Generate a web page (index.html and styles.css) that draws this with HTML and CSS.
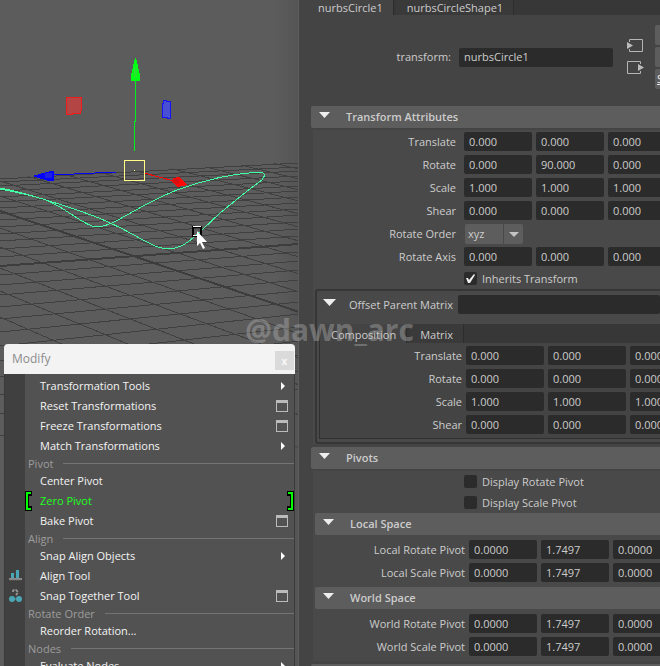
FILE: index.html
```html
<!DOCTYPE html>
<html lang="en">
<head>
<meta charset="utf-8">
<title>Modify</title>
<link rel="stylesheet" href="styles.css">
</head>
<body>
<main class="app">
  <section class="viewport" aria-label="Viewport">
    <svg class="scene" width="298" height="666" viewBox="0 0 298 666" shape-rendering="crispEdges" aria-hidden="true">
      <defs>
        <clipPath id="ground"><path d="M0 178 299 162V666H0z"/></clipPath>
      </defs>
      <g class="grid" clip-path="url(#ground)">
        <path d="M0 179 299 163M0 182 299 167M0 186 299 171M0 191 299 176M0 197 299 181M0 202 299 186M0 208 299 191M0 214 299 197M0 220 299 203M0 227 299 209M0 234 299 215M0 241 299 222M0 249 299 229M0 257 299 236M0 275 299 252M0 285 299 261M0 295 299 270M0 307 299 280M0 319 299 291M0 332 299 302M0 346 299 314M0 361 299 327M0 377 299 341M0 395 299 355M0 414 299 371M0 436 299 389"/>
        <path d="M0 92 299 159M0 100 299 169M0 107 299 179M0 116 299 190M0 125 299 201M0 135 299 214M0 145 299 227M0 156 299 241M0 168 299 257M0 181 299 274M0 196 299 292M0 228 299 334M0 247 299 358M0 268 299 385M0 291 299 415M0 317 299 448"/>
        <path class="axis" d="M0 266 299 244M0 211 299 312"/>
      </g>
      <path class="curve" d="M0 188C18 191 32 196 46 200C64 207 78 221 92 226C101 228 107 225 114 222C132 213 154 198 180 189C205 180 235 173 262 172L265 175L262 180L246 192L220 213L202 230C190 241 181 249 168 249C151 248 136 234 110 223C92 214 68 207 46 200C30 195 16 192 0 189"/>
      <path d="M135.500 80V121H134.500V151" fill="none" stroke="#00f01c"/>
      <path d="M135 58h1l4 17v6h-9v-6z" fill="#00ff15"/>
      <path d="M134 68h3v9h-3z" fill="#23e82c"/>
      <path d="M66.500 97.500H81.500V109L80.500 113.500H73L72 114.500H66.500z" fill="#b34545" stroke="#ef1c1c"/>
      <path d="M163.500 100.500H166L167 101.500H170.500V118.500H168L167 117.500H162.500V103.500H163.500z" fill="#484fd5" stroke="#1616f5"/>
      <path d="M53 175 116 172" fill="none" stroke="#0404f5"/>
      <path d="M32 176 51 171h3v10h-5z" fill="#0303ff"/>
      <path d="M45 173h7v5h-7z" fill="#2020e0"/>
      <path d="M144 173 174 181" fill="none" stroke="#f00"/>
      <path d="M173 178 179 177 187 184V185L177 187 172 182z" fill="#ff0808"/>
      <path d="M174 179h5v5h-4l-2-2z" fill="#d91010"/>
      <rect x="124.500" y="160.500" width="20" height="20" fill="none" stroke="#ffff85"/>
      <path d="M134 170h1v1h-1z" fill="#ffff85"/>
      <rect x="193" y="226.500" width="8" height="9" fill="none" stroke="#000" stroke-width="2"/>
      <path d="M193 226h8v1h-8zM193 235h5v1h-5z" fill="#fff"/>
      <path d="M197 231V246L200 243 203 249 205 248 202 242H207z" fill="#fff" shape-rendering="auto"/>
    </svg>

    <nav class="menu" aria-label="Modify">
      <header class="menu-title"><span>Modify</span><button class="close" type="button" aria-label="Close">x</button></header>
      <div class="menu-body">
        <button class="item" type="button">Transformation Tools<i class="more"></i></button>
        <button class="item" type="button">Reset Transformations<i class="option"></i></button>
        <button class="item" type="button">Freeze Transformations<i class="option"></i></button>
        <button class="item" type="button">Match Transformations<i class="more"></i></button>
        <div class="group">Pivot</div>
        <button class="item" type="button">Center Pivot</button>
        <button class="item picked" type="button">Zero Pivot
          <svg class="bracket" width="7" height="20" aria-hidden="true"><path d="M0 0h7v5H4v10h3v5H0z" fill="#000"/><path d="M1 1h5v2H3v14h3v2H1z" fill="#0f0"/></svg>
          <svg class="bracket end" width="7" height="20" aria-hidden="true"><path d="M7 0H0v5h3v10H0v5h7z" fill="#000"/><path d="M6 1H1v2h3v14H1v2h5z" fill="#0f0"/></svg>
        </button>
        <button class="item" type="button">Bake Pivot<i class="option"></i></button>
        <div class="group">Align</div>
        <button class="item" type="button">Snap Align Objects<i class="more"></i></button>
        <button class="item" type="button">
          <svg class="tool" width="14" height="14" aria-hidden="true"><path d="M2 4h3v5H2zM7 1h3v8H7z" fill="#4aa6b5"/><path d="M0 9h13v2H0z" fill="#898989"/><path d="M1 11h11" stroke="#777" stroke-dasharray="1"/></svg>
          Align Tool</button>
        <button class="item" type="button">
          <svg class="tool" width="14" height="14" aria-hidden="true"><path d="M4 3Q4 0 7 1Q10 3 7 6" fill="none" stroke="#929292" stroke-width="2" stroke-dasharray="3 1"/><circle cx="3" cy="10" r="3" fill="#4aa6b5"/><circle cx="10" cy="10" r="3" fill="#4aa6b5"/><path d="M6 10h1" stroke="#4aa6b5"/></svg>
          Snap Together Tool<i class="option"></i></button>
        <div class="group">Rotate Order</div>
        <button class="item" type="button">Reorder Rotation...</button>
        <div class="group">Nodes</div>
        <button class="item" type="button">Evaluate Nodes<i class="more"></i></button>
      </div>
    </nav>
  </section>

  <section class="editor" aria-label="Attribute editor">
    <div class="tabs" role="tablist">
      <button class="tab active" type="button" role="tab" aria-selected="true">nurbsCircle1</button>
      <button class="tab" type="button" role="tab" aria-selected="false">nurbsCircleShape1</button>
    </div>

    <div class="node">
      <label for="node-name">transform:</label>
      <input id="node-name" value="nurbsCircle1">
      <div class="links">
        <button type="button" aria-label="Go to input"><svg width="17" height="14" aria-hidden="true"><path d="M2.500 3V.5H15.500V12.500H2.500V10" fill="none" stroke="#b5b5b5"/><path d="M0 3v7l6-3.500z" fill="#bbb"/></svg></button>
        <button type="button" aria-label="Go to output"><svg width="17" height="14" aria-hidden="true"><path d="M13.500 3V.5H.5V12.500H13.500V10" fill="none" stroke="#b5b5b5"/><path d="M11 3v7l6-3.500z" fill="#bbb"/></svg></button>
      </div>
      <div class="side">
        <button type="button" aria-label="Focus"></button>
        <button type="button" aria-label="Presets"></button>
        <button type="button"><u>S</u>how</button>
      </div>
    </div>

    <h2 class="bar">Transform Attributes</h2>
    <div class="content">
      <div class="row"><label for="t">Translate</label><input id="t" value="0.000"><input aria-label="Translate Y" value="0.000"><input aria-label="Translate Z" value="0.000"></div>
      <div class="row"><label for="r">Rotate</label><input id="r" value="0.000"><input aria-label="Rotate Y" value="90.000"><input aria-label="Rotate Z" value="0.000"></div>
      <div class="row"><label for="s">Scale</label><input id="s" value="1.000"><input aria-label="Scale Y" value="1.000"><input aria-label="Scale Z" value="1.000"></div>
      <div class="row"><label for="h">Shear</label><input id="h" value="0.000"><input aria-label="Shear XZ" value="0.000"><input aria-label="Shear YZ" value="0.000"></div>
      <div class="row"><label for="ro">Rotate Order</label><div class="select"><select id="ro"><option>xyz</option></select></div></div>
      <div class="row"><label for="ra">Rotate Axis</label><input id="ra" value="0.000"><input aria-label="Rotate Axis Y" value="0.000"><input aria-label="Rotate Axis Z" value="0.000"></div>
      <label class="check"><input type="checkbox" checked>Inherits Transform</label>

      <div class="matrix">
        <div class="matrix-head"><label for="opm">Offset Parent Matrix</label><input id="opm"></div>
        <div class="matrix-body">
          <div class="tabs inner" role="tablist">
            <button class="tab active" type="button" role="tab" aria-selected="true">Composition</button>
            <button class="tab" type="button" role="tab" aria-selected="false">Matrix</button>
          </div>
          <div class="row wide"><label for="mt">Translate</label><input id="mt" value="0.000"><input aria-label="Offset translate Y" value="0.000"><input aria-label="Offset translate Z" value="0.000"></div>
          <div class="row wide"><label for="mr">Rotate</label><input id="mr" value="0.000"><input aria-label="Offset rotate Y" value="0.000"><input aria-label="Offset rotate Z" value="0.000"></div>
          <div class="row wide"><label for="ms">Scale</label><input id="ms" value="1.000"><input aria-label="Offset scale Y" value="1.000"><input aria-label="Offset scale Z" value="1.000"></div>
          <div class="row wide"><label for="mh">Shear</label><input id="mh" value="0.000"><input aria-label="Offset shear XZ" value="0.000"><input aria-label="Offset shear YZ" value="0.000"></div>
        </div>
      </div>
    </div>

    <h2 class="bar">Pivots</h2>
    <div class="content">
      <label class="check"><input type="checkbox">Display Rotate Pivot</label>
      <label class="check"><input type="checkbox">Display Scale Pivot</label>
      <h3 class="bar sub">Local Space</h3>
      <div class="pivots">
        <div class="row pivot"><label for="lr">Local Rotate Pivot</label><input id="lr" value="0.0000"><input aria-label="Local rotate pivot Y" value="1.7497"><input aria-label="Local rotate pivot Z" value="0.0000"></div>
        <div class="row pivot"><label for="ls">Local Scale Pivot</label><input id="ls" value="0.0000"><input aria-label="Local scale pivot Y" value="1.7497"><input aria-label="Local scale pivot Z" value="0.0000"></div>
      </div>
      <h3 class="bar sub">World Space</h3>
      <div class="pivots">
        <div class="row pivot"><label for="wr">World Rotate Pivot</label><input id="wr" value="0.0000"><input aria-label="World rotate pivot Y" value="1.7497"><input aria-label="World rotate pivot Z" value="0.0000"></div>
        <div class="row pivot"><label for="ws">World Scale Pivot</label><input id="ws" value="0.0000"><input aria-label="World scale pivot Y" value="1.7497"><input aria-label="World scale pivot Z" value="0.0000"></div>
      </div>
    </div>
    <div class="bar"></div>
  </section>
  <div class="watermark">@dawn_arc</div>
</main>
</body>
</html>
```
FILE: styles.css
```css
*, ::before, ::after { box-sizing: border-box; }

body {
  margin: 0;
  background: #444;
  color: #ccc;
  font: 11px/20px "Open Sans", sans-serif;
}

button, input, select {
  margin: 0;
  border: 0;
  padding: 0;
  font: inherit;
  color: inherit;
  background: none;
}

.app {
  position: relative;
  display: flex;
  height: 100vh;
  overflow: hidden;
}

.viewport {
  position: relative;
  flex: 0 0 298px;
  overflow: hidden;
  background: linear-gradient(90deg, #5c5c5c 92%, #555);
}

.scene { display: block; }
.grid { fill: none; stroke: #404040; }
.axis { stroke: #3d3d3d; stroke-width: 2; }
.curve { fill: none; stroke: #43ffa3; }

/* Floating menu */
.menu {
  position: absolute;
  z-index: 2;
  left: 4px;
  right: 3px;
  top: 344px;
  color: #f4f4f4;
}

.menu-title {
  display: flex;
  justify-content: space-between;
  align-items: center;
  height: 30px;
  padding: 0 1px 0 8px;
  border-radius: 4px 4px 0 0;
  background: #f3f3f3;
  color: #8c8c8c;
  font-size: 12px;
}

.close {
  width: 19px;
  height: 19px;
  margin-top: 3px;
  background: #dadada;
  color: #f8f8f8;
  font-weight: 700;
  font-size: 10px;
  line-height: 16px;
}

.menu-body {
  display: flex;
  flex-direction: column;
  padding: 2px 0;
  border: solid #3a3a3a;
  border-width: 0 1px;
  background: linear-gradient(90deg, #404040 20px, #525252 20px);
}

.item {
  position: relative;
  display: flex;
  align-items: center;
  justify-content: space-between;
  height: 20px;
  padding: 0 6px 0 35px;
  text-align: left;
}

.picked { color: #1fff1f; }

.more {
  width: 0;
  margin-right: 3px;
  border: solid transparent;
  border-width: 4px 0 4px 4px;
  border-left-color: #fff;
}

.option {
  width: 12px;
  height: 12px;
  border: 1px solid #bbb;
  border-top-width: 3px;
}

.bracket { position: absolute; left: 20px; top: 0; }
.bracket.end { left: auto; right: 0; }
.tool { position: absolute; left: 4px; top: 3px; }

.group {
  display: flex;
  align-items: center;
  gap: 10px;
  height: 15px;
  padding-left: 23px;
  color: #9c9c9c;
  line-height: 14px;
}

.group::after {
  content: "";
  flex: 1;
  height: 1px;
  background: #747474;
}

/* Attribute editor */
.editor {
  flex: 1;
  min-width: 0;
  overflow: hidden;
  border-left: 1px solid #5d5d5d;
  background: #444;
}

.tabs {
  display: flex;
  gap: 2px;
  height: 15px;
  margin-left: 8px;
  background: #373737;
}

.tab {
  padding: 0 10px 0 11px;
  border-right: 1px solid #2d2d2d;
  background: #3a3a3a;
  line-height: 15px;
}

.tab.active { background: #444; }

.node {
  display: flex;
  gap: 8px;
  align-items: center;
  height: 91px;
  padding-bottom: 7px;
}

.node > label {
  flex: 0 0 152px;
  text-align: right;
}

.editor input:not([type="checkbox"]) {
  height: 19px;
  padding: 0 5px;
  border-radius: 2px;
  background: #2b2b2b;
}

.node > input {
  flex: 0 0 154px;
  margin-right: 6px;
}

.links {
  display: flex;
  flex-direction: column;
  gap: 8px;
}

.links button { display: flex; }

.side {
  display: flex;
  flex-direction: column;
  gap: 2px;
  flex: 0 0 60px;
  margin-left: 3px;
}

.side button {
  height: 20px;
  padding-left: 2px;
  border-radius: 2px;
  background: #5d5d5d;
  color: #eee;
  text-align: left;
}

.bar {
  display: flex;
  align-items: center;
  height: 22px;
  margin: 0 0 2px 12px;
  padding-left: 8px;
  border-radius: 2px 0 0 2px;
  background: #5d5d5d;
  font-size: 11px;
  font-weight: 600;
  line-height: 24px;
}

.bar:empty::before { display: none; }

.bar::before,
.matrix-head::before {
  content: "";
  flex: 0 0 11px;
  height: 6px;
  margin: 0 16px 4px 0;
  background: #eee;
  clip-path: polygon(0 0, 100% 0, 50% 100%);
}

.bar.sub { margin: 0 0 0 2px; }

.content {
  margin: 0 0 3px 14px;
  background: #494949;
}

.row {
  display: grid;
  grid-template-columns: 147px repeat(3, 68px);
  column-gap: 4px;
  align-items: center;
  height: 23px;
}

.row > label {
  padding-right: 4px;
  text-align: right;
}

.row input { width: 100%; }

.select {
  position: relative;
  width: 58px;
  height: 20px;
  margin-left: 1px;
  border-radius: 2px;
  background: linear-gradient(90deg, #5d5d5d 38px, #494949 38px, #494949 39px, #5d5d5d 39px);
}

.select select {
  width: 100%;
  height: 20px;
  padding-left: 3px;
  appearance: none;
}

.select::after {
  content: "";
  position: absolute;
  right: 4px;
  top: 8px;
  border: solid transparent;
  border-width: 5px 5px 0;
  border-top-color: #c4c4c4;
  pointer-events: none;
}

.check {
  display: flex;
  align-items: center;
  gap: 5px;
  height: 21px;
  padding-left: 151px;
}

.check input {
  width: 13px;
  height: 13px;
  border-radius: 2px;
  background: #2b2b2b;
  appearance: none;
}

.check input:checked::before {
  content: "";
  display: block;
  height: 13px;
  background: #eee;
  clip-path: polygon(2px 6px, 4px 6px, 5px 8px, 10px 2px, 11px 3px, 6px 11px, 4px 11px);
}

.matrix {
  margin-left: 2px;
  padding: 0 0 3px 2px;
  border: 2px solid #363636;
  border-right: 0;
  border-radius: 3px 0 0 3px;
}

.matrix-head {
  display: flex;
  align-items: center;
  height: 33px;
  padding: 0 0 6px 4px;
}

.matrix-head::before {
  flex-basis: 13px;
  height: 7px;
  margin-right: 13px;
}

.matrix-head label { flex: 0 0 109px; }
.matrix-head input { flex: 1; min-width: 0; }

.matrix-body {
  padding-bottom: 2px;
  border: solid #303030;
  border-width: 0 0 1px 1px;
  background: #444;
}

.tabs.inner {
  height: 19px;
  margin: 0 0 1px;
}

.inner .tab { line-height: 21px; }
.row.wide { grid-template-columns: 142px repeat(3, 78px); }
.row.wide > label,
.row.pivot > label { padding-right: 0; }

.pivots { padding: 3px 0; }
.row.pivot { grid-template-columns: 152px repeat(3, 68px); }

.watermark {
  position: absolute;
  z-index: 1;
  left: 245px;
  top: 310px;
  color: rgba(185, 185, 185, .4);
  font-size: 30px;
  font-weight: 700;
  line-height: 40px;
  pointer-events: none;
}
```
